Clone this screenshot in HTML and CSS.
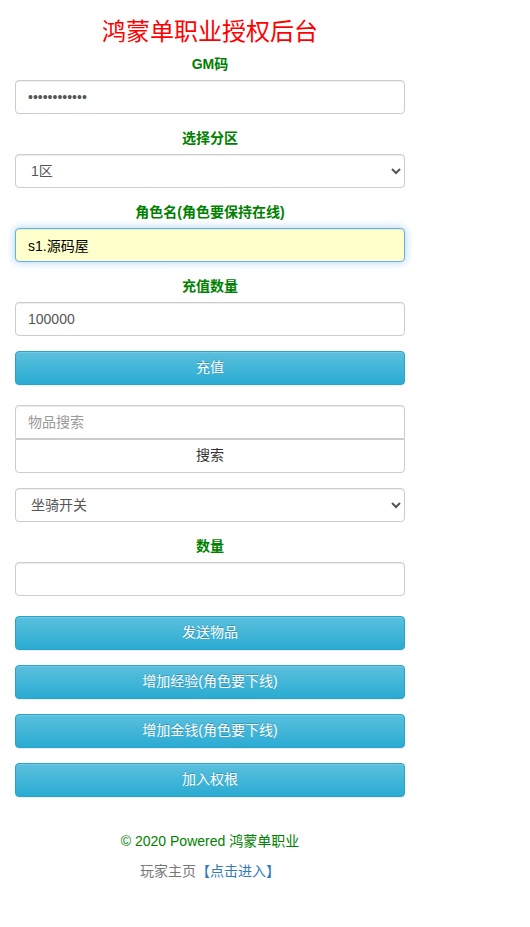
FILE: index.html
```html
<!DOCTYPE html>
<html lang="zh-CN">
  <head>
    <meta charset="UTF-8" />
    <meta name="viewport" content="width=device-width, initial-scale=1.0" />
    <title>鸿蒙单职业授权后台</title>
    <link rel="stylesheet" href="styles.css">
  </head>
  <body>
    <div class="container">
      <h3 class="title">鸿蒙单职业授权后台</h3>

      <form class="gm-form" onsubmit="return false">
        <div class="form-group">
          <label for="gmcode">GM码</label>
          <input type="password" id="gmcode" class="form-control" value="123456789012" />
        </div>

        <div class="form-group">
          <label for="zone">选择分区</label>
          <select id="zone" class="form-control">
            <option>1区</option>
            <option>2区</option>
          </select>
        </div>

        <div class="form-group">
          <label for="role">角色名(角色要保持在线)</label>
          <input type="text" id="role" class="form-control autofilled focused" value="s1.源码屋" />
        </div>

        <div class="form-group">
          <label for="amount">充值数量</label>
          <input type="text" id="amount" class="form-control" value="100000" />
        </div>

        <button class="btn btn-info">充值</button>

        <div class="search-group">
          <input type="text" class="form-control" placeholder="物品搜索" />
          <button class="btn btn-default">搜索</button>
        </div>

        <div class="form-group">
          <select class="form-control">
            <option>坐骑开关</option>
          </select>
        </div>

        <div class="form-group">
          <label for="num">数量</label>
          <input type="text" id="num" class="form-control" />
        </div>

        <div class="actions">
          <button class="btn btn-info">发送物品</button>
          <button class="btn btn-info">增加经验(角色要下线)</button>
          <button class="btn btn-info">增加金钱(角色要下线)</button>
          <button class="btn btn-info">加入权根</button>
        </div>
      </form>

      <footer>
        <p class="copy">© 2020 Powered 鸿蒙单职业</p>
        <p class="home">玩家主页<a href="#">【点击进入】</a></p>
      </footer>
    </div>
  </body>
</html>
```

FILE: styles.css
```css
body {
  font-family: "Liberation Sans", "Noto Sans CJK SC", sans-serif;
  font-size: 14px;
  line-height: 1.42857;
  color: #333;
  margin: 0;
  background-color: #fff;
}
.container {
  width: 390px;
  padding: 0 15px;
}
.title {
  margin: 19px 0 10px;
  font-size: 24px;
  font-weight: normal;
  line-height: 26px;
  color: #f00;
  text-align: center;
}
.form-group {
  margin-bottom: 15px;
  text-align: center;
}
label {
  display: inline-block;
  margin-bottom: 5px;
  font-weight: bold;
  color: green;
}
.form-control {
  display: block;
  box-sizing: border-box;
  width: 100%;
  height: 34px;
  padding: 6px 12px;
  font-family: inherit;
  font-size: 14px;
  line-height: 1.42857;
  color: #555;
  background-color: #fff;
  border: 1px solid #ccc;
  border-radius: 4px;
  box-shadow: inset 0 1px 1px rgba(0, 0, 0, 0.075);
}
select.form-control {
  padding: 6px 8px 6px 11px;
}
.form-control::placeholder {
  color: #999;
}
.form-control.autofilled {
  background-color: #ffffcc;
  color: #000;
}
.form-control.focused {
  border-color: #66afe9;
  outline: 0;
  box-shadow: inset 0 1px 1px rgba(0, 0, 0, 0.075),
    0 0 8px rgba(102, 175, 233, 0.6);
}
.btn {
  display: block;
  box-sizing: border-box;
  width: 100%;
  height: 34px;
  padding: 6px 12px;
  font-family: inherit;
  font-size: 14px;
  line-height: 1.42857;
  border: 1px solid transparent;
  border-radius: 4px;
  cursor: pointer;
}
.btn-info {
  color: #fff;
  background-color: #5bc0de;
  background-image: linear-gradient(to bottom, #5bc0de 0, #2aabd2 100%);
  border-color: #28a4c9;
  text-shadow: 0 -1px 0 rgba(0, 0, 0, 0.2);
  box-shadow: inset 0 1px 0 rgba(255, 255, 255, 0.15),
    0 1px 1px rgba(0, 0, 0, 0.075);
}
.btn-default {
  color: #333;
  background-color: #fff;
  border-color: #ccc;
}
.search-group {
  margin: 20px 0 15px;
}
.search-group .form-control {
  border-radius: 4px 4px 0 0;
}
.search-group .btn {
  border-radius: 0 0 4px 4px;
}
.actions {
  display: flex;
  flex-direction: column;
  gap: 15px;
  margin-top: 20px;
}
footer {
  margin-top: 35px;
  text-align: center;
}
footer p {
  margin: 0 0 10px;
}
.copy {
  color: green;
}
.home {
  color: #777;
}
.home a {
  color: #337ab7;
  text-decoration: none;
}
```
